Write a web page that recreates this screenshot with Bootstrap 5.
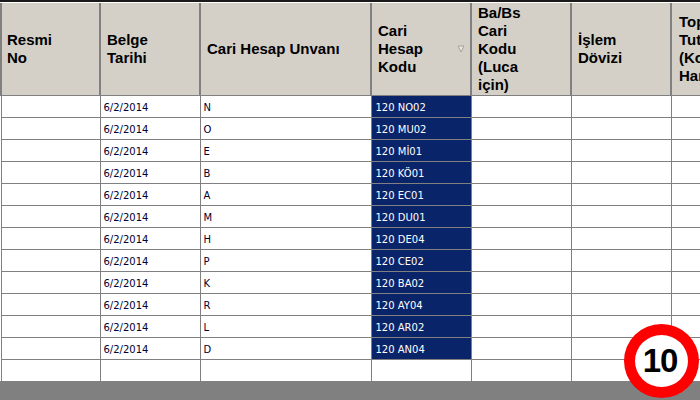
<!DOCTYPE html>
<html lang="tr">
<head>
<meta charset="utf-8">
<title>Cari Hesap Listesi</title>
<link href="https://cdn.jsdelivr.net/npm/bootstrap@5.3.0/dist/css/bootstrap.min.css" rel="stylesheet">
<style>
html, body { height: 400px; overflow: hidden; }
body { background: #fff; }
.shell { height: 400px; width: 700px; }
.topline { height: 3px; background: #fff; border-top: 2px solid #1a1a1a; flex: none; }
.gridwrap { height: 378px; overflow: hidden; flex: none; }
.footbar { background: #808080; flex: 1 1 auto; }
table.sheet { width: 770px; table-layout: fixed; border-collapse: collapse; margin: 0; font-family: "DejaVu Sans", sans-serif; font-size: 10px; color: #000030; }
table.sheet > :not(caption) > * > * { padding: 2px 0 0 3px; border: 1px solid #808080; box-shadow: none; background: #fff; color: #000030; height: 22px; line-height: 13px; vertical-align: middle; white-space: nowrap; }
table.sheet > thead > tr > th { background: #d4d0c8; color: #000; font-family: "Liberation Sans", sans-serif; font-weight: 700; font-size: 15px; line-height: 18px; padding: 0 6px; height: 92px; white-space: normal; border: 0; border-left: 2px solid #808080; border-bottom: 1px solid #808080; }
table.sheet > thead > tr > th.lead-col { padding-left: 5px; }
table.sheet > tbody > tr > td.picked { background: #0a246a; color: #fff; padding-left: 4px; }
table.sheet > thead > tr > th.clip { white-space: nowrap; padding-left: 7px; }
.sortmark { flex: none; margin-right: -1px; }
.speedsign { position: absolute; left: 624px; top: 324px; width: 75px; height: 74px; padding: 0 3px 2px 0; border: 11px solid #fe0000; background: #fff; font-family: "Liberation Sans", sans-serif; font-weight: 700; font-size: 33px; letter-spacing: -1px; color: #000; line-height: 1; }
</style>
</head>
<body class="m-0 position-relative">
<div class="shell d-flex flex-column">
  <div class="topline"></div>
  <div class="gridwrap">
    <table class="table sheet">
      <colgroup><col style="width:99px"><col style="width:100px"><col style="width:171px"><col style="width:100px"><col style="width:100px"><col style="width:100px"><col style="width:100px"></colgroup>
      <thead>
        <tr>
          <th class="lead-col">Resmi<br>No</th>
          <th>Belge<br>Tarihi</th>
          <th>Cari Hesap Unvanı</th>
          <th><div class="d-flex align-items-center justify-content-between"><span>Cari<br>Hesap<br>Kodu</span><svg class="sortmark" width="8" height="8" viewBox="0 0 8 8"><path d="M1 1h6L4 7z" fill="#e8e6e1" stroke="#a5a29b" stroke-width="1"/></svg></div></th>
          <th>Ba/Bs<br>Cari<br>Kodu<br>(Luca<br>için)</th>
          <th>İşlem<br>Dövizi</th>
          <th class="clip">Toplam<br>Tutar<br>(Kodu<br>Hareket</th>
        </tr>
      </thead>
      <tbody>
        <tr><td></td><td>6/2/2014</td><td>N</td><td class="picked">120 NO02</td><td></td><td></td><td></td></tr>
        <tr><td></td><td>6/2/2014</td><td>O</td><td class="picked">120 MU02</td><td></td><td></td><td></td></tr>
        <tr><td></td><td>6/2/2014</td><td>E</td><td class="picked">120 Mİ01</td><td></td><td></td><td></td></tr>
        <tr><td></td><td>6/2/2014</td><td>B</td><td class="picked">120 KÖ01</td><td></td><td></td><td></td></tr>
        <tr><td></td><td>6/2/2014</td><td>A</td><td class="picked">120 EC01</td><td></td><td></td><td></td></tr>
        <tr><td></td><td>6/2/2014</td><td>M</td><td class="picked">120 DU01</td><td></td><td></td><td></td></tr>
        <tr><td></td><td>6/2/2014</td><td>H</td><td class="picked">120 DE04</td><td></td><td></td><td></td></tr>
        <tr><td></td><td>6/2/2014</td><td>P</td><td class="picked">120 CE02</td><td></td><td></td><td></td></tr>
        <tr><td></td><td>6/2/2014</td><td>K</td><td class="picked">120 BA02</td><td></td><td></td><td></td></tr>
        <tr><td></td><td>6/2/2014</td><td>R</td><td class="picked">120 AY04</td><td></td><td></td><td></td></tr>
        <tr><td></td><td>6/2/2014</td><td>L</td><td class="picked">120 AR02</td><td></td><td></td><td></td></tr>
        <tr><td></td><td>6/2/2014</td><td>D</td><td class="picked">120 AN04</td><td></td><td></td><td></td></tr>
        <tr><td></td><td></td><td></td><td></td><td></td><td></td><td></td></tr>
      </tbody>
    </table>
  </div>
  <div class="footbar"></div>
</div>
<div class="speedsign rounded-circle d-flex align-items-center justify-content-center">10</div>
<script src="https://cdn.jsdelivr.net/npm/bootstrap@5.3.0/dist/js/bootstrap.bundle.min.js"></script>
</body>
</html>
